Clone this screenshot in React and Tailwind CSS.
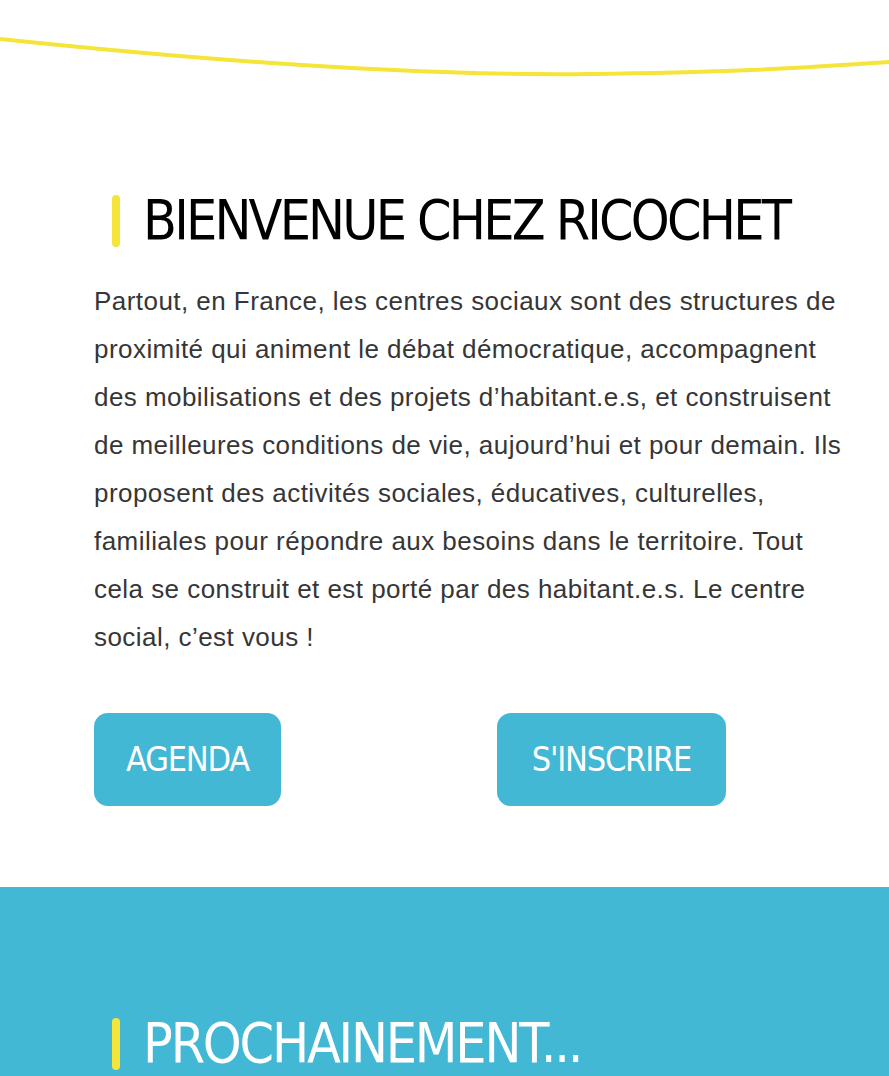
export default function App() {
  const heading = { fontFamily: '"DejaVu Sans Condensed", "DejaVu Sans", sans-serif' };
  const body = { fontFamily: '"Liberation Sans", Arial, sans-serif' };

  return (
    <div className="w-[889px] min-h-[1076px] bg-white overflow-hidden">
      <svg width="889" height="90" viewBox="0 0 889 90" className="block">
        <path d="M0 39 C 200 60, 420 76, 590 74 S 820 66, 889 62" fill="none" stroke="#f5e43a" strokeWidth="4" />
      </svg>

      <section className="pt-[103px] pb-[81px]">
        <div className="flex items-center pl-[112px]">
          <span className="w-2 h-[52px] rounded-full bg-[#f5e43a]" />
          <h1 className="ml-[23px] text-[55px] leading-none text-black tracking-[-2.8px]" style={heading}>
            BIENVENUE CHEZ RICOCHET
          </h1>
        </div>

        <p className="ml-[94px] mt-[29px] w-[755px] text-[26px] leading-[48px] tracking-[0.45px] text-[#363636]" style={body}>
          Partout, en France, les centres sociaux sont des structures de proximité qui animent le débat démocratique, accompagnent des mobilisations et des projets d’habitant.e.s, et construisent de meilleures conditions de vie, aujourd’hui et pour demain. Ils proposent des activités sociales, éducatives, culturelles, familiales pour répondre aux besoins dans le territoire. Tout cela se construit et est porté par des habitant.e.s. Le centre social, c’est vous !
        </p>

        <div className="ml-[94px] mt-[52px] grid grid-cols-[403px_auto]">
          <a className="w-[187px] h-[93px] rounded-[14px] bg-[#42b8d4] flex items-center justify-center text-white text-[34px] tracking-[-1.2px]" style={heading}>
            AGENDA
          </a>
          <a className="w-[229px] h-[93px] rounded-[14px] bg-[#42b8d4] flex items-center justify-center text-white text-[34px] tracking-[-1.2px]" style={heading}>
            S'INSCRIRE
          </a>
        </div>
      </section>

      <section className="bg-[#42b8d4] pt-[129px] pb-[40px]">
        <div className="flex items-center pl-[112px]">
          <span className="w-2 h-[52px] rounded-full bg-[#f5e43a]" />
          <h2 className="ml-[23px] text-[55px] leading-none text-white tracking-[-2.2px]" style={heading}>
            PROCHAINEMENT...
          </h2>
        </div>
      </section>
    </div>
  );
}
